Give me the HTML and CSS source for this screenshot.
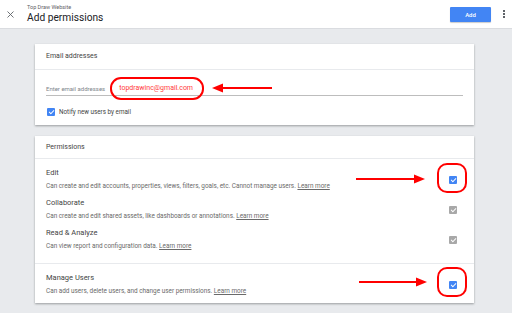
FILE: index.html
```html
<!DOCTYPE html>
<html lang="en">
<head>
    <meta charset="UTF-8">
    <meta name="viewport" content="width=device-width, initial-scale=1.0">
    <title>Add permissions</title>
    <link rel="stylesheet" href="styles.css">
</head>
<body>

<div class="topbar">
    <svg class="close-icon" width="7" height="7" viewBox="0 0 7 7">
        <path d="M0.5 0.5L6.5 6.5M6.5 0.5L0.5 6.5" stroke="#5f6368" stroke-width="0.9"/>
    </svg>
    <div class="titles">
        <div class="subtitle">Top Draw Website</div>
        <div class="title">Add permissions</div>
    </div>
    <button class="add-btn">Add</button>
    <div class="more">
        <span></span><span></span><span></span>
    </div>
</div>

<div class="content">
    <div class="card">
        <div class="card-header">Email addresses</div>
        <div class="email-body">
            <div class="email-field">
                <span class="placeholder">Enter email addresses</span>
                <span class="email-value">topdrawinc@gmail.com</span>
            </div>
            <div class="notify-row">
                <span class="checkbox"></span>
                <span>Notify new users by email</span>
            </div>
        </div>
    </div>

    <div class="card">
        <div class="card-header small">Permissions</div>
        <div class="perm-group">
            <div class="perm-row">
                <div class="perm-text">
                    <div class="perm-title">Edit</div>
                    <div class="perm-desc">Can create and edit accounts, properties, views, filters, goals, etc. Cannot manage users. <u>Learn more</u></div>
                </div>
                <span class="checkbox"></span>
            </div>
            <div class="perm-row">
                <div class="perm-text">
                    <div class="perm-title">Collaborate</div>
                    <div class="perm-desc">Can create and edit shared assets, like dashboards or annotations. <u>Learn more</u></div>
                </div>
                <span class="checkbox disabled"></span>
            </div>
            <div class="perm-row">
                <div class="perm-text">
                    <div class="perm-title">Read &amp; Analyze</div>
                    <div class="perm-desc">Can view report and configuration data. <u>Learn more</u></div>
                </div>
                <span class="checkbox disabled"></span>
            </div>
        </div>
        <div class="perm-group last">
            <div class="perm-row">
                <div class="perm-text">
                    <div class="perm-title">Manage Users</div>
                    <div class="perm-desc">Can add users, delete users, and change user permissions. <u>Learn more</u></div>
                </div>
                <span class="checkbox"></span>
            </div>
        </div>
    </div>
</div>

<!-- red annotations drawn over the screenshot -->
<svg class="marks" width="512" height="313" viewBox="0 0 512 313">
    <g fill="none" stroke="#ff0000" stroke-width="2">
        <rect x="111" y="78" width="92" height="21" rx="10"/>
        <rect x="438" y="164" width="28" height="28" rx="9"/>
        <rect x="438" y="268" width="28" height="28" rx="9"/>
        <line x1="272" y1="88" x2="220" y2="88"/>
        <line x1="356" y1="179" x2="416" y2="179"/>
        <line x1="359" y1="282" x2="418" y2="282"/>
    </g>
    <g fill="#ff0000">
        <polygon points="212,88 223,83.5 223,92.5"/>
        <polygon points="425,179 414,174.5 414,183.5"/>
        <polygon points="427,282 416,277.5 416,286.5"/>
    </g>
</svg>

</body>
</html>
```

FILE: styles.css
```css
body {
    margin: 0;
    font-family: Roboto, "Noto Sans", Arial, sans-serif;
    background-color: #e8eaed;
    color: #3c4043;
    width: 512px;
    height: 313px;
    overflow: hidden;
    position: relative;
}
.topbar {
    height: 29px;
    background-color: white;
    border-bottom: 1px solid #dadce0;
    box-sizing: border-box;
    display: flex;
    align-items: center;
    padding: 0 6px 0 7px;
}
.close-icon {
    margin-top: 1px;
    margin-right: 13px;
}
.titles {
    flex: 1;
    margin-top: -2px;
}
.subtitle {
    font-size: 5.5px;
    color: #5f6368;
    line-height: 8px;
}
.title {
    font-size: 10.2px;
    line-height: 13px;
    color: #202124;
}
.add-btn {
    width: 41px;
    height: 15px;
    background-color: #4285f4;
    color: white;
    border: none;
    border-radius: 1px;
    font-family: Roboto, Arial, sans-serif;
    font-size: 6px;
    font-weight: 500;
    padding: 0;
    margin-top: 0;
    box-shadow: 0 1px 1px rgba(0, 0, 0, 0.2);
}
.more {
    width: 3px;
    margin-left: 12px;
    display: flex;
    flex-direction: column;
    gap: 1.5px;
}
.more span {
    width: 1.5px;
    height: 1.5px;
    background-color: #5f6368;
}
.content {
    padding: 15px 0 0 35px;
    width: 439px;
}
.card {
    background-color: white;
    box-shadow: 0 1px 2px rgba(60, 64, 67, 0.45);
    margin-bottom: 11px;
}
.card-header {
    height: 25px;
    line-height: 25px;
    padding-left: 11px;
    font-size: 7px;
    color: #444;
    border-bottom: 1px solid #e8eaed;
}
.card-header.small {
    height: 22px;
    line-height: 22px;
}
.email-body {
    padding: 11px 11px 8px 11px;
}
.email-field {
    height: 14px;
    border-bottom: 1px solid #bdbdbd;
    display: flex;
    align-items: center;
    font-size: 6px;
}
.placeholder {
    color: #80868b;
}
.email-value {
    color: #ff3b3b;
    font-size: 7px;
    margin-left: 14px;
}
.notify-row {
    margin-top: 11px;
    height: 10px;
    display: flex;
    align-items: center;
    gap: 4px;
    font-size: 6.3px;
    color: #444;
}
.checkbox {
    width: 8px;
    height: 8px;
    flex: none;
    border-radius: 1px;
    background-color: #4285f4;
    position: relative;
    margin-left: 1px;
}
.checkbox::after {
    content: "";
    position: absolute;
    left: 2.5px;
    top: 0.8px;
    width: 2px;
    height: 4.2px;
    border: solid white;
    border-width: 0 1.2px 1.2px 0;
    transform: rotate(45deg);
}
.checkbox.disabled {
    background-color: #a8a8a8;
}
.perm-group {
    padding-bottom: 14px;
    border-bottom: 1px solid #e8eaed;
}
.perm-group.last {
    padding-bottom: 9px;
    border-bottom: none;
}
.perm-row {
    display: flex;
    padding: 8px 17px 0 11px;
    height: 22px;
}
.perm-text {
    flex: 1;
}
.perm-title {
    font-size: 7.5px;
    line-height: 12px;
    color: #444;
}
.perm-desc {
    font-size: 6.4px;
    line-height: 12px;
    margin-top: 1px;
    color: #6a6a6a;
}
.perm-row .checkbox {
    margin-top: 9px;
}
.marks {
    position: absolute;
    left: 0;
    top: 0;
}
```
